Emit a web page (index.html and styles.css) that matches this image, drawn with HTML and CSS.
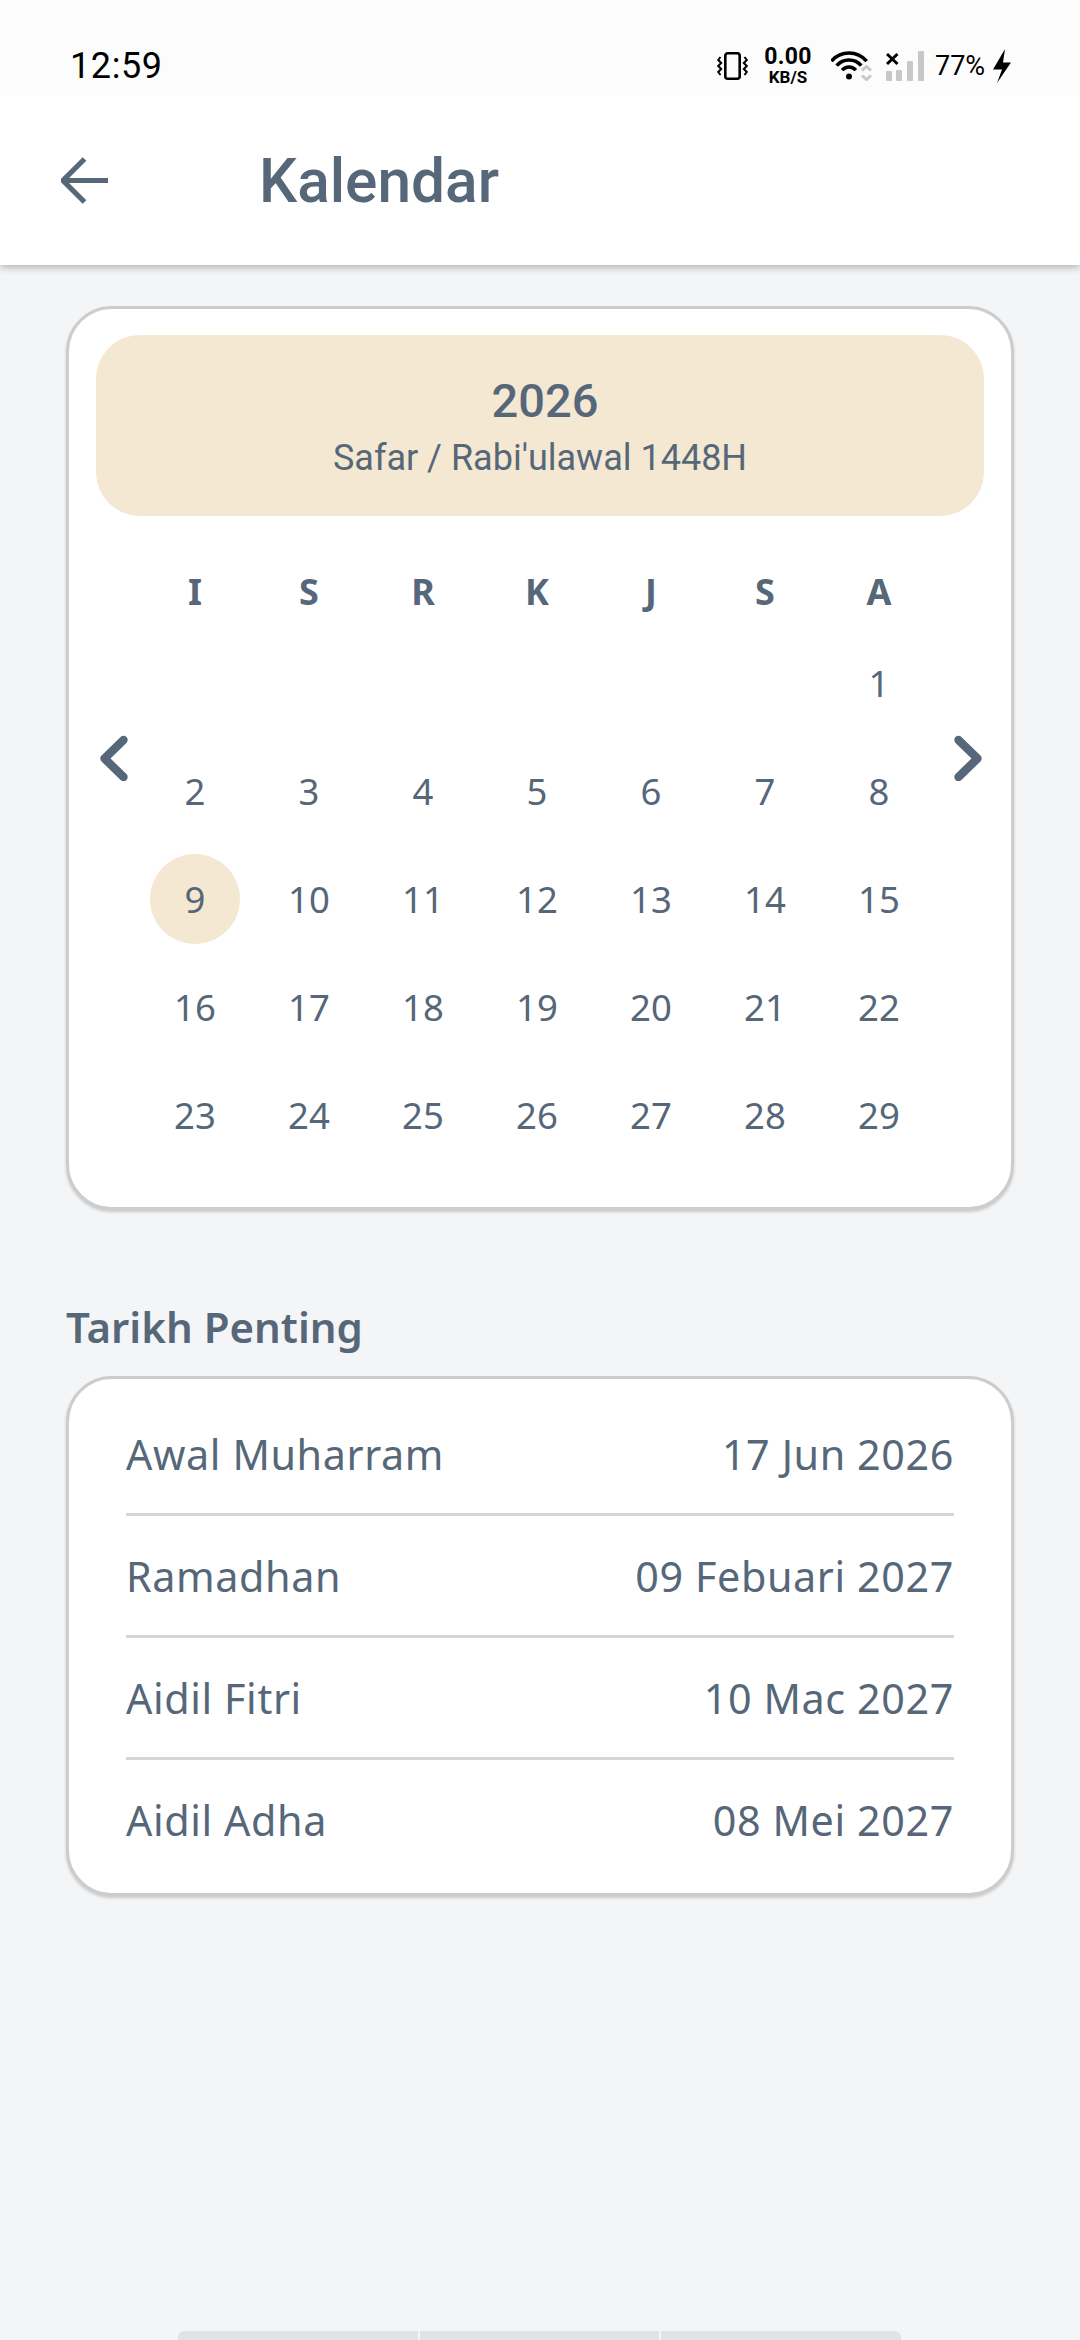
FILE: index.html
```html
<!DOCTYPE html>
<html lang="ms">
<head>
<meta charset="utf-8">
<title>Kalendar</title>
<link rel="stylesheet" href="styles.css">
</head>
<body>
<div class="page">
  <div class="status">
    <span class="time">12:59</span>
    <div class="status-icons">
      <svg class="ic-vib" width="31" height="28" viewBox="0 0 31 28" fill="none" stroke="#000"><rect x="8.3" y="1.3" width="14.4" height="25.4" rx="2.5" stroke-width="2.6"/><path d="M3.5 5 L1.2 8 L4.2 11 L1.2 14 L4.2 17 L1.2 20 L3.5 23" stroke-width="2"/><path d="M27.5 5 L29.8 8 L26.8 11 L29.8 14 L26.8 17 L29.8 20 L27.5 23" stroke-width="2"/></svg>
      <div class="speed"><span class="speed-num">0.00</span><span class="speed-unit">KB/S</span></div>
      <svg class="ic-wifi" width="41" height="30" viewBox="0 0 41 30" fill="none"><path d="M.4 10.2 A23 23 0 0 1 35.6 10.2 M5.7 14.7 A16 16 0 0 1 30.3 14.7 M11.1 19.2 A9 9 0 0 1 24.9 19.2" stroke="#000" stroke-width="3.5"/><circle cx="18" cy="25.5" r="3" fill="#000"/><path d="M31 19.5 L35.5 15.5 L40 19.5 M31 24.5 L35.5 28.5 L40 24.5" stroke="#c8c8c8" stroke-width="3"/></svg>
      <svg class="ic-signal" width="38" height="30" viewBox="0 0 38 30"><path d="M1 3 L11.5 13 M11.5 3 L1 13" stroke="#000" stroke-width="3"/><rect x="0" y="20" width="6" height="10" rx="1" fill="#c8c8c8"/><rect x="10" y="19" width="6" height="11" rx="1" fill="#c8c8c8"/><rect x="21" y="10" width="6" height="20" rx="1" fill="#c8c8c8"/><rect x="32" y="0" width="6" height="30" rx="1" fill="#c8c8c8"/></svg>
      <span class="batt">77%</span>
      <svg class="ic-bolt" width="19" height="34" viewBox="0 0 19 34"><path d="M13 0 L1 20.5 L10 20.5 L5 34 L19 13.5 L11 13.5Z" fill="#000"/></svg>
    </div>
  </div>
  <header class="appbar">
    <svg class="back" width="48" height="48" viewBox="0 0 48 48" fill="none" stroke="#566779" stroke-width="5.2"><path d="M47 23.5 H3 M23.5 2 L2 23.5 L23.5 45"/></svg>
    <h1 class="title">Kalendar</h1>
  </header>
  <main class="content">
    <section class="card cal">
      <div class="cal-head">
        <div class="year">2026</div>
        <div class="hijri">Safar / Rabi'ulawal 1448H</div>
      </div>
      <div class="cal-body">
        <svg class="nav" width="32" height="46" viewBox="0 0 32 46" fill="none" stroke="#566779" stroke-width="8.4" stroke-linecap="round" stroke-linejoin="round"><path d="M25.5 5 L6.5 23.5 L25.5 42"/></svg>
        <div class="grid">
          <span class="dow">I</span><span class="dow">S</span><span class="dow">R</span><span class="dow">K</span><span class="dow">J</span><span class="dow">S</span><span class="dow">A</span>
          <span class="day"></span><span class="day"></span><span class="day"></span><span class="day"></span><span class="day"></span><span class="day"></span><span class="day">1</span>
          <span class="day">2</span><span class="day">3</span><span class="day">4</span><span class="day">5</span><span class="day">6</span><span class="day">7</span><span class="day">8</span>
          <span class="day"><span class="today">9</span></span><span class="day">10</span><span class="day">11</span><span class="day">12</span><span class="day">13</span><span class="day">14</span><span class="day">15</span>
          <span class="day">16</span><span class="day">17</span><span class="day">18</span><span class="day">19</span><span class="day">20</span><span class="day">21</span><span class="day">22</span>
          <span class="day">23</span><span class="day">24</span><span class="day">25</span><span class="day">26</span><span class="day">27</span><span class="day">28</span><span class="day">29</span>
        </div>
        <svg class="nav nav-next" width="32" height="46" viewBox="0 0 32 46" fill="none" stroke="#566779" stroke-width="8.4" stroke-linecap="round" stroke-linejoin="round"><path d="M6.5 5 L25.5 23.5 L6.5 42"/></svg>
      </div>
    </section>
    <h2 class="section-title">Tarikh Penting</h2>
    <section class="card dates">
      <div class="row"><span>Awal Muharram</span><span>17 Jun 2026</span></div>
      <div class="row"><span>Ramadhan</span><span>09 Febuari 2027</span></div>
      <div class="row"><span>Aidil Fitri</span><span>10 Mac 2027</span></div>
      <div class="row"><span>Aidil Adha</span><span>08 Mei 2027</span></div>
    </section>
  </main>
  <div class="tabs"><i class="tab"></i><i class="tab"></i><i class="tab"></i></div>
</div>
</body>
</html>
```
FILE: styles.css
```css
* { box-sizing: border-box; }
html, body { margin: 0; padding: 0; }
body { font-family: "Noto Sans", sans-serif; color: #566779; background: #f4f5f7; }
.page { width: 1080px; height: 2340px; display: flex; flex-direction: column; overflow: hidden; background: #f4f5f7; }

.status { height: 96px; flex: none; background: #fcfcfc; display: flex; align-items: center; justify-content: space-between; padding: 36px 69px 0 70px; color: #000; position: relative; z-index: 2; }
.time { font: 400 36px/1 Roboto, sans-serif; letter-spacing: .6px; }
.status-icons { display: flex; align-items: center; }
.ic-vib { margin-right: 16px; }
.speed { display: flex; flex-direction: column; align-items: center; width: 48px; font-family: Roboto, sans-serif; font-weight: 700; margin-right: 19px; }
.speed-num { font-size: 23px; line-height: 22px; letter-spacing: .3px; }
.speed-unit { font-size: 17px; line-height: 18px; }
.ic-wifi { margin-right: 14px; }
.ic-signal { margin-right: 11px; }
.batt { font: 400 27px/1 Roboto, sans-serif; margin-right: 7px; width: 50px; white-space: nowrap; }

.appbar { height: 169px; flex: none; background: #fff; display: flex; align-items: center; padding-left: 61px; box-shadow: 0 2px 8px rgba(0,0,0,.3); position: relative; z-index: 1; }
.back { margin-right: 150px; }
.title { margin: 0; font: 500 60.4px/1 Roboto, sans-serif; color: #566779; position: relative; top: 2px; }

.content { flex: 1; padding: 41px 66px 0; display: flex; flex-direction: column; }
.card { background: #fff; border: 3px solid #cdcdcd; border-radius: 46px; box-shadow: 0 2px 3px rgba(0,0,0,.18); }
.cal { height: 904px; padding: 26px 27px 0; }
.cal-head { height: 181px; border-radius: 44px; background: #f4e8d2; display: flex; flex-direction: column; align-items: center; padding-top: 42px; }
.year { font: 500 47px/1 Roboto, sans-serif; padding-left: 10px; }
.hijri { font: 400 36px/1 Roboto, sans-serif; margin-top: 16px; }

.cal-body { display: flex; align-items: flex-start; padding: 0 0 0 2px; }
.nav { flex: none; margin-top: 219px; }
.nav-next { margin-left: auto; }
.grid { flex: none; width: 798px; margin-left: 8px; display: grid; grid-template-columns: repeat(7, 114px); grid-template-rows: 74px repeat(5, 108px); margin-top: 39px; }
.dow { font: 700 36px/1 "Noto Sans", sans-serif; display: flex; align-items: center; justify-content: center; }
.day { font: 400 36.5px/1 "Noto Sans", sans-serif; display: flex; align-items: center; justify-content: center; }
.today { width: 90px; height: 90px; border-radius: 50%; background: #f4e8d2; display: flex; align-items: center; justify-content: center; }

.section-title { margin: 91px 0 0; font: 600 42px/52px "Noto Sans", sans-serif; color: #566779; }
.dates { margin-top: 23px; height: 520px; padding: 0 57px 0 57px; display: flex; flex-direction: column; }
.row { height: 122px; flex: none; padding-top: 2px; display: flex; align-items: center; justify-content: space-between; font: 400 41.3px/1 "Noto Sans", sans-serif; letter-spacing: .6px; border-bottom: 3px solid #d6d6d6; }
.row:first-child { height: 137px; padding-top: 17px; }
.row:last-child { border-bottom: 0; height: 120px; padding-top: 1px; }

.tabs { position: absolute; left: 178px; top: 2331px; width: 723px; height: 9px; display: flex; gap: 2px; border-radius: 6px 6px 0 0; overflow: hidden; }
.tab { flex: 1; background: #e1e2e4; }
```
